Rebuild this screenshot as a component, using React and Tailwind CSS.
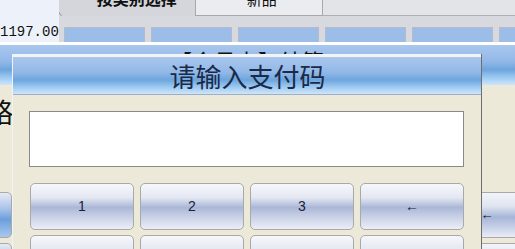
import React from "react";

const cjk = { fontFamily: '"Noto Sans CJK SC", "Noto Sans", sans-serif' };
const mono = { fontFamily: '"Liberation Mono", monospace' };

const barGrad = "bg-[linear-gradient(to_bottom,#a9c7ee_0%,#93b9e8_40%,#6ea5dd_62%,#9ecbf2_82%,#cfe5fa_100%)]";
const keyGrad = "bg-[linear-gradient(to_bottom,#f6f7fb_0%,#e4e8f2_30%,#aab7d6_52%,#c4cde4_70%,#eceef6_100%)]";

function Key({ label }) {
  return (
    <button className={`h-[47px] rounded-[5px] border border-[#a9a9a9] ${keyGrad} text-[14px] text-[#1a2040] flex items-center justify-center`}>
      <span style={{ fontFamily: '"Liberation Sans", sans-serif' }}>{label}</span>
    </button>
  );
}

function Background() {
  return (
    <div className="flex flex-col w-full h-full">
      {/* top strip */}
      <div className="flex h-[42px] shrink-0">
        <div className="w-[62px] bg-[#edf2fa] flex items-end pb-[1px]">
          <span className="text-[14px] leading-none text-[#111] pb-[2px]" style={mono}>1197.00</span>
        </div>
        <div className="flex-1 flex flex-col bg-[#d7d9de]">
          <div className="h-[16px] flex">
            <div className="w-[136px] relative bg-[#d4d6dc] overflow-hidden">
              <div className="absolute left-[2px] top-0 h-[16px] w-[12px] border-l border-[#9a9a9a] skew-x-[35deg] origin-bottom-left"></div>
              <span className="absolute left-[38px] top-[-10px] text-[16px] font-bold text-[#111] leading-none" style={cjk}>按类别选择</span>
            </div>
            <div className="w-[128px] relative bg-[#ebecef] border-l border-b border-r border-[#a9a9a9] overflow-hidden">
              <span className="absolute left-[51px] top-[-9px] text-[15px] text-[#111] leading-none" style={cjk}>新品</span>
            </div>
            <div className="flex-1 bg-[#e3e4e8] border-b border-[#b0b0b4]"></div>
          </div>
          <div className="flex-1 flex items-end pl-[5px] gap-[6px] overflow-hidden">
            {[0, 1, 2, 3, 4, 5].map((i) => (
              <div key={i} className="w-[81px] h-[15px] shrink-0 bg-[#9dbde9] border border-b-0 border-[#b4bccb]"></div>
            ))}
          </div>
        </div>
      </div>
      <div className="h-[3px] shrink-0 bg-white"></div>
      {/* header */}
      <div className={`h-[40px] shrink-0 ${barGrad} overflow-hidden`}>
        <div className="pl-[170px] pt-[4px] text-[22px] leading-none text-[#111]" style={cjk}>【会员卡】结算</div>
      </div>
      {/* body */}
      <div className="flex-1 bg-[#ece9d9] flex flex-col overflow-hidden">
        <div className="ml-[-14px] mt-[13px] text-[27px] leading-none text-[#111]" style={cjk}>略</div>
        <div className="mt-[67px] flex flex-col gap-[5px]">
          {[0, 1].map((r) => (
            <div key={r} className="flex justify-between h-[46px] shrink-0">
              <div className="w-[120px] ml-[-108px] rounded-[5px] border border-[#a9a9a9] bg-[linear-gradient(to_bottom,#e6eaf4_0%,#a9c4ea_35%,#6d9fdc_60%,#a8c8ee_100%)]"></div>
              <div className="w-[180px] mr-[-62px] rounded-[5px] border border-[#a9a9a9] bg-[linear-gradient(to_bottom,#f2f4fa_0%,#dfe4f0_30%,#a6b6d8_55%,#c3cde6_75%,#e9ecf6_100%)] flex items-center justify-center text-[13px] text-[#111]">
                {r === 0 ? "←" : ""}
              </div>
            </div>
          ))}
        </div>
      </div>
    </div>
  );
}

export default function App() {
  return (
    <div className="relative w-[515px] h-[249px] overflow-hidden bg-[#ece9d9]">
      <Background />
      {/* dialog overlay */}
      <div className="absolute left-[12px] top-[54px] w-[470px] bg-[#ece9d9] border-l border-t-[3px] border-[#f3f3f3] flex flex-col">
        <div className="absolute right-0 top-[-3px] bottom-0 w-px bg-[#6e6e6e]"></div>
        <div className={`h-[38px] shrink-0 ${barGrad} border-b border-[#9fb0c6] flex items-center justify-center`}>
          <span className="text-[26px] leading-none text-[#1b2a48]" style={cjk}>请输入支付码</span>
        </div>
        <div className="pl-[16px] pt-[16px] pb-[10px]">
          <div className="w-[435px] h-[56px] bg-white border border-[#8a8a8a]"></div>
          <div className="mt-[16px] ml-[1px] grid grid-cols-[104px_104px_104px_104px] gap-x-[6px] gap-y-[5px]">
            <Key label="1" />
            <Key label="2" />
            <Key label="3" />
            <Key label="←" />
            <Key label="4" />
            <Key label="5" />
            <Key label="6" />
            <Key label="0" />
          </div>
        </div>
      </div>
    </div>
  );
}
